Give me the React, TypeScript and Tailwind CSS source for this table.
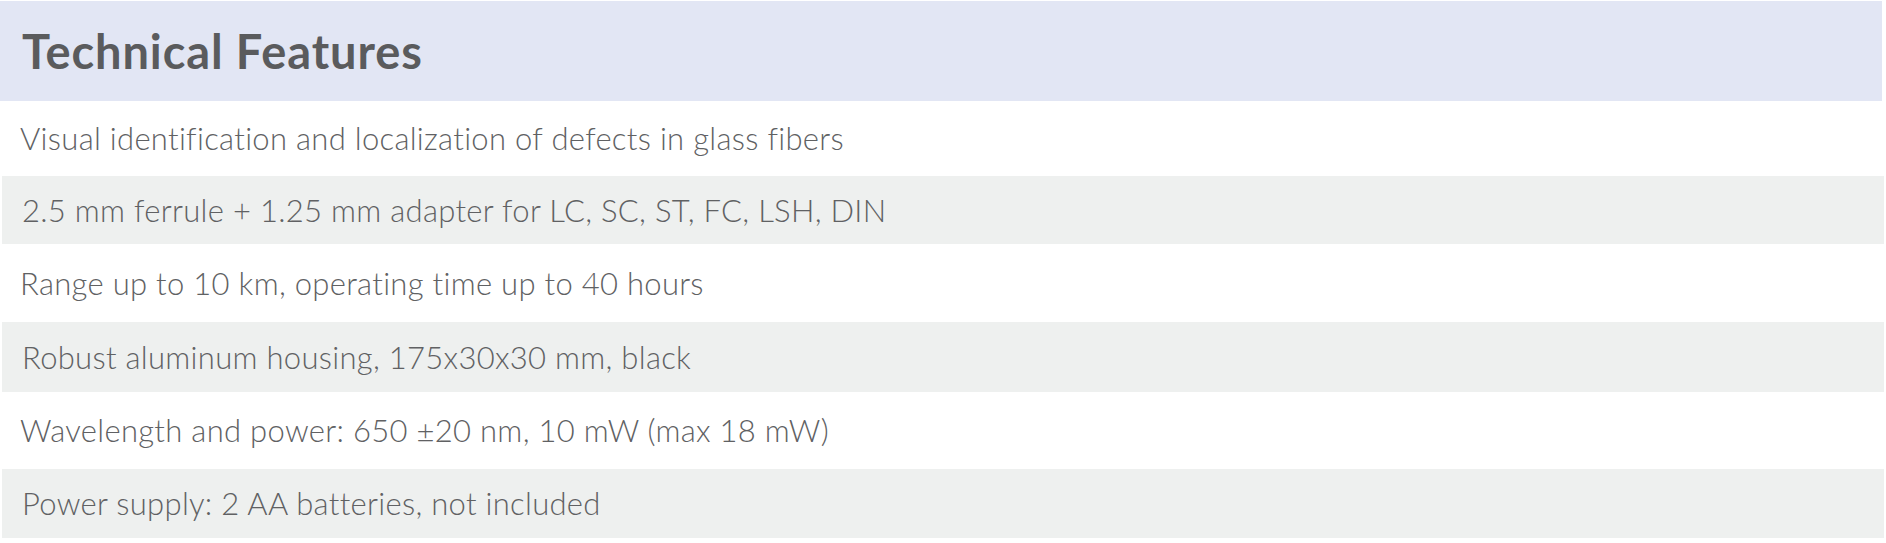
const features = [
  { text: "Visual identification and localization of defects in glass fibers", h: "h-[75px]" },
  { text: "2.5 mm ferrule + 1.25 mm adapter for LC, SC, ST, FC, LSH, DIN", h: "h-[68px]" },
  { text: "Range up to 10 km, operating time up to 40 hours", h: "h-[78px]" },
  { text: "Robust aluminum housing, 175x30x30 mm, black", h: "h-[70px]" },
  { text: "Wavelength and power: 650 ±20 nm, 10 mW (max 18 mW)", h: "h-[77px]" },
  { text: "Power supply: 2 AA batteries, not included", h: "h-[69px]" },
];

export default function App() {
  return (
    <main className="w-[1886px] h-[543px] bg-white pt-px font-['Lato',sans-serif] text-[#5a5b5d]">
      <div className="w-[1882px] h-[100px] bg-[#e2e6f4] flex items-center pl-[22px]">
        <h2 className="text-[47px] font-bold leading-none tracking-[0.9px]">Technical Features</h2>
      </div>
      <ul>
        {features.map((f, i) => (
          <li
            key={i}
            className={
              i % 2 === 0
                ? `${f.h} flex items-center pl-[20px] bg-white`
                : `${f.h} flex items-center pl-[20px] ml-[2px] w-[1882px] bg-[#eef0ef]`
            }
          >
            <span className="text-[31px] font-light leading-none tracking-[0.3px] text-[#606163]">
              {f.text}
            </span>
          </li>
        ))}
      </ul>
    </main>
  );
}
